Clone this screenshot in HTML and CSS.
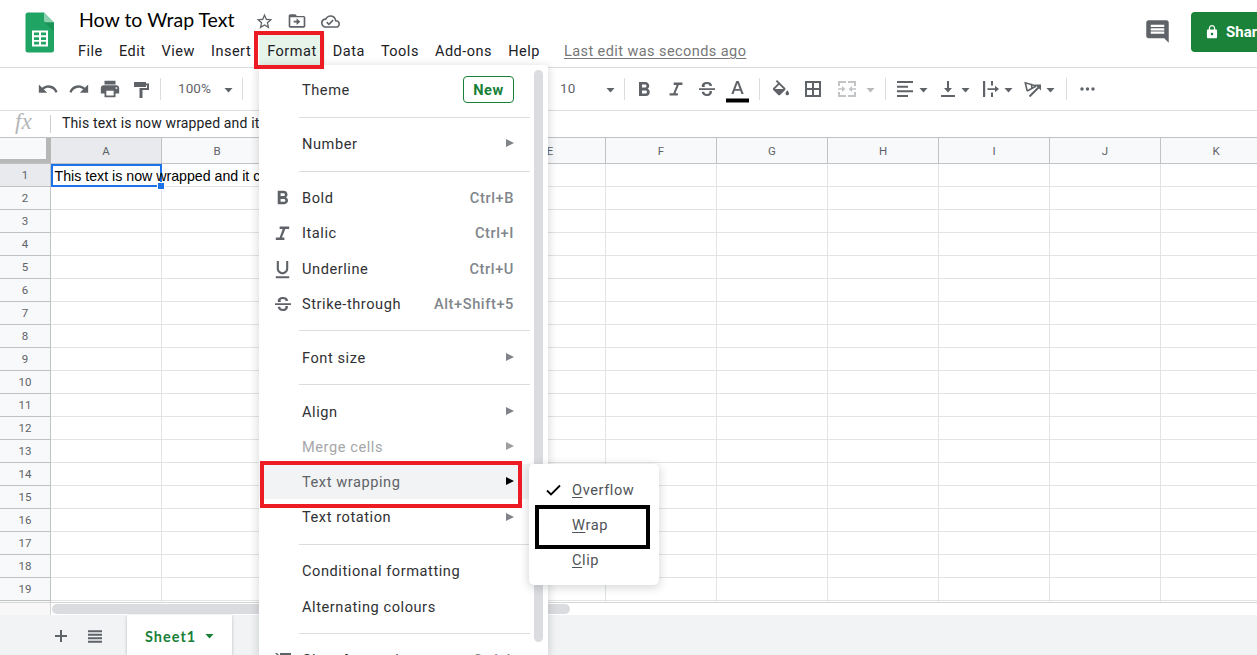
FILE: index.html
```html
<!DOCTYPE html>
<html lang="en-GB">
<head>
<meta charset="utf-8">
<title>How to Wrap Text</title>
<link rel="stylesheet" href="styles.css">
</head>
<body>
<div class="app">
  <header class="header">
    <svg class="logo" width="30" height="41" viewBox="0 0 30 41"><path d="M3 .5h16l10 10V38a2.500 2.500 0 0 1-2.500 2.500H3A2.500 2.500 0 0 1 .5 38V3A2.500 2.500 0 0 1 3 .5z" fill="#1fa463"/><path d="M19 .5l10 10H21.500A2.500 2.500 0 0 1 19 8z" fill="#8ed1b1"/><path d="M19.500 10.500H29v9z" fill="#189255"/><path fill="#fff" fill-rule="evenodd" d="M7 18.500h16v16H7zM9 20.500v2.700h5v-2.700zM16 20.500v2.700h5v-2.700zM9 25.200v2.700h5v-2.700zM16 25.200v2.700h5v-2.700zM9 29.800v2.700h5v-2.700zM16 29.800v2.700h5v-2.700z"/></svg>
    <div class="heading">
      <div class="title-row">
        <span class="title">How to Wrap Text</span>
        <svg class="ic star" width="19" height="19" viewBox="0 0 24 24"><path d="M22 9.240l-7.190-.62L12 2 9.190 8.630 2 9.240l5.460 4.730L5.820 21 12 17.270 18.180 21l-1.630-7.030L22 9.240zM12 15.400l-3.760 2.270 1-4.280-3.320-2.880 4.380-.38L12 6.100l1.710 4.040 4.380.38-3.320 2.880 1 4.280L12 15.400z"/></svg>
        <svg class="ic move" width="20" height="20" viewBox="0 0 24 24"><path d="M20 6h-8l-2-2H4c-1.100 0-2 .9-2 2v12c0 1.100.9 2 2 2h16c1.100 0 2-.9 2-2V8c0-1.100-.9-2-2-2zm0 12H4V7.500h16V18zM11.500 16.800l4.500-4-4.500-4v3H8v2h3.500z"/></svg>
        <svg class="ic cloud" width="19" height="19" viewBox="0 0 24 24"><path d="M19.350 10.040A7.490 7.490 0 0 0 12 4C9.110 4 6.600 5.640 5.350 8.040A5.994 5.994 0 0 0 0 14c0 3.310 2.690 6 6 6h13c2.760 0 5-2.240 5-5 0-2.640-2.050-4.780-4.650-4.960zM19 18H6c-2.210 0-4-1.790-4-4 0-2.050 1.530-3.760 3.560-3.970l1.070-.11.5-.95A5.469 5.469 0 0 1 12 6c2.620 0 4.880 1.860 5.390 4.430l.3 1.500 1.530.11A2.980 2.980 0 0 1 22 15c0 1.650-1.350 3-3 3zm-9-3.820l-2.090-2.090L6.500 13.500 10 17l6.010-6.010-1.410-1.410z"/></svg>
      </div>
      <nav class="menubar">
        <span class="m">File</span><span class="m">Edit</span><span class="m">View</span><span class="m">Insert</span><span class="m">Format</span><span class="m">Data</span><span class="m">Tools</span><span class="m">Add-ons</span><span class="m">Help</span><span class="last-edit">Last edit was seconds ago</span>
      </nav>
    </div>
    <svg class="ic comment" width="27" height="27" viewBox="0 0 24 24"><path d="M21.990 4c0-1.100-.89-2-1.990-2H4c-1.100 0-2 .9-2 2v12c0 1.100.9 2 2 2h14l4 4-.01-18zM18 14H6v-2h12v2zm0-3H6V9h12v2zm0-3H6V6h12v2z"/></svg>
    <div class="share"><svg width="12" height="14" viewBox="4 1 16 22"><path fill="#fff" fill-rule="evenodd" d="M18 8h-1V6c0-2.760-2.240-5-5-5S7 3.240 7 6v2H6c-1.100 0-2 .9-2 2v10c0 1.100.9 2 2 2h12c1.100 0 2-.9 2-2V10c0-1.100-.9-2-2-2zm-6 9c-1.100 0-2-.9-2-2s.9-2 2-2 2 .9 2 2-.9 2-2 2zm3.100-9H8.900V6a3.100 3.100 0 0 1 6.200 0v2z"/></svg><span>Share</span></div>
  </header>

  <div class="toolbar">
    <span class="tool"><svg class="ic" width="22" height="22" viewBox="0 0 24 24"><path d="M12.500 8c-2.650 0-5.050.99-6.900 2.600L2 7v9h9l-3.620-3.620c1.390-1.160 3.160-1.880 5.120-1.880 3.540 0 6.550 2.310 7.600 5.500l2.370-.78C21.080 11.030 17.150 8 12.500 8z"/></svg></span>
    <span class="tool"><svg class="ic" width="22" height="22" viewBox="0 0 24 24"><path d="M18.400 10.600C16.550 8.990 14.150 8 11.500 8c-4.650 0-8.580 3.030-9.960 7.220L3.900 16c1.050-3.190 4.050-5.500 7.600-5.500 1.950 0 3.730.72 5.120 1.880L13 16h9V7l-3.600 3.600z"/></svg></span>
    <span class="tool"><svg class="ic" width="22" height="22" viewBox="0 0 24 24"><path d="M19 8H5c-1.660 0-3 1.340-3 3v6h4v4h12v-4h4v-6c0-1.660-1.340-3-3-3zm-3 11H8v-5h8v5zm3-7c-.55 0-1-.45-1-1s.45-1 1-1 1 .45 1 1-.45 1-1 1zm-1-9H6v4h12V3z"/></svg></span>
    <span class="tool paint"><svg class="ic" width="15" height="17" viewBox="0 0 15 17"><path d="M0 1h12v1.500h3V9H8.500v8H5.500V7H13V4.300h-1V6H0z"/></svg></span>
    <i class="bar"></i>
    <span class="val zoom">100%</span><i class="caret"></i><i class="bar bar-zoom"></i>
    <span class="val size">10</span><i class="caret"></i><i class="bar bar-size"></i>
    <span class="tool bold"><svg class="ic" width="24" height="24" viewBox="0 0 24 24"><path d="M15.600 10.790c.97-.67 1.650-1.770 1.650-2.790 0-2.260-1.750-4-4-4H7v14h7.040c2.090 0 3.710-1.700 3.710-3.790 0-1.520-.86-2.820-2.150-3.420zM10 6.500h3c.83 0 1.500.67 1.500 1.500s-.67 1.500-1.500 1.500h-3v-3zm3.500 9H10v-3h3.500c.83 0 1.500.67 1.500 1.500s-.67 1.500-1.500 1.500z"/></svg></span>
    <span class="tool"><svg class="ic" width="22" height="22" viewBox="0 0 24 24"><path d="M9.500 5v2.500h3.200L9 16.500H5V19h9v-2.500h-2.600l3.700-9H19V5z"/></svg></span>
    <span class="tool"><svg class="ic" width="16" height="16" viewBox="0 0 16 16"><path d="M0 7.200h16V9H0zM3 5.900C2 2.800 4.800 1 8 1c3.200 0 5 1.600 5 4h-2.500c0-1.200-.9-2-2.500-2-2.200 0-3.100 1.300-2 2.900zM10.200 10h2.600c.8 2.900-1.600 5-4.800 5-3.200 0-5.200-1.700-5.200-4.200h2.500c.1 1.400 1 2.200 2.700 2.200 2 0 3-1.400 2.200-3z"/></svg></span>
    <span class="tool text-colour"><svg class="ic" width="23" height="22" viewBox="0 0 23 22"><path d="M10.300 0h2.400l5 13h-2.300l-1.100-3.200H8.700L7.600 13H5.300zM9.400 7.900h4.200L11.500 2.200z"/><path d="M0 17.500h23v4H0z" fill="#000"/></svg></span>
    <i class="bar bar-colour"></i>
    <span class="tool fill"><svg class="ic" width="18" height="18" viewBox="2 0 20 20"><path d="M16.560 8.940L7.620 0 6.210 1.410l2.380 2.380-5.150 5.150c-.59.59-.59 1.540 0 2.120l5.500 5.500c.29.29.68.44 1.060.44s.77-.15 1.060-.44l5.500-5.500c.59-.58.59-1.530 0-2.120zM5.210 10L10 5.210 14.790 10zM19 11.500s-2 2.170-2 3.500c0 1.100.9 2 2 2s2-.9 2-2c0-1.330-2-3.500-2-3.500z"/></svg></span>
    <span class="tool borders"><svg class="ic" width="16" height="16" viewBox="0 0 16 16"><path fill-rule="evenodd" d="M0 0h16v16H0zM2 2v5h5V2zM9 2v5h5V2zM2 9v5h5V9zM9 9v5h5V9z"/></svg></span>
    <span class="tool merge"><svg width="18" height="16" viewBox="0 0 18 16" fill="#c2c4c6"><path d="M0 0h8v2H2v3H0zM10 0h8v5h-2V2h-6zM0 11h2v3h6v2H0zM16 11h2v5h-8v-2h6zM0 7.200h4V5l3.500 3L4 11V8.800H0zM18 7.200h-4V5l-3.500 3 3.500 3V8.800h4z"/></svg></span><i class="caret faded"></i>
    <i class="bar bar-merge"></i>
    <span class="tool halign"><svg class="ic" width="16" height="16" viewBox="0 0 16 16"><path d="M0 0h16v2H0zM0 4.700h11v2H0zM0 9.300h16v2H0zM0 14h11v2H0z"/></svg></span><i class="caret c1"></i>
    <span class="tool valign"><svg class="ic" width="14" height="16" viewBox="0 0 14 16"><path d="M6 0h2v7h3l-4 4.500L3 7h3zM0 14h14v2H0z"/></svg></span><i class="caret c2"></i>
    <span class="tool wrapping"><svg class="ic" width="16" height="16" viewBox="0 0 16 16"><path d="M0 0h2.200v16H0zM8 0h2v4.500H8zM8 11.500h2V16H8zM4.500 7.200H12V4.800L16 8l-4 3.200V8.900H4.500z"/></svg></span><i class="caret c3"></i>
    <span class="tool rotation"><svg width="18" height="17" viewBox="0 0 18 17" fill="none" stroke="#5f6368" stroke-width="2"><path d="M3.200 10L1.300 1.800l11 3.200M3.200 10l9.100-5M7.500 2.800l.5 5" stroke-width="1.600"/><path d="M5.500 15.500L15 6"/><path d="M17 3.500v6l-6-6z" fill="#5f6368" stroke="none"/></svg></span><i class="caret c4"></i>
    <i class="bar bar-rotate"></i>
    <svg class="ic more" width="15" height="4" viewBox="0 0 15 4"><circle cx="2" cy="2" r="1.700"/><circle cx="7.500" cy="2" r="1.700"/><circle cx="13" cy="2" r="1.700"/></svg>
  </div>

  <div class="formula">
    <span class="fx">fx</span><i class="fx-bar"></i><span class="fx-text">This text is now wrapped and it can be seen</span>
  </div>

  <div class="columns">
    <div class="corner"></div>
    <div class="col active">A</div><div class="col">B</div><div class="col">C</div><div class="col">D</div><div class="col">E</div><div class="col">F</div><div class="col">G</div><div class="col">H</div><div class="col">I</div><div class="col">J</div><div class="col">K</div>
  </div>
  <div class="sheet">
    <div class="rows">
      <div class="row active">1</div><div class="row">2</div><div class="row">3</div><div class="row">4</div><div class="row">5</div><div class="row">6</div><div class="row">7</div><div class="row">8</div><div class="row">9</div><div class="row">10</div><div class="row">11</div><div class="row">12</div><div class="row">13</div><div class="row">14</div><div class="row">15</div><div class="row">16</div><div class="row">17</div><div class="row">18</div><div class="row">19</div>
    </div>
    <div class="cells">
      <div class="selected"><span class="cell-text">This text is now wrapped and it can be</span><i class="handle"></i></div>
    </div>
  </div>
  <div class="hscroll"><div class="hscroll-head"></div><div class="hthumb"></div></div>
  <footer class="footer">
    <svg class="plus" width="12" height="12" viewBox="0 0 12 12"><path d="M5 0h2v5h5v2H7v5H5V7H0V5h5z" fill="#5f6368"/></svg>
    <svg class="all" width="14" height="13" viewBox="0 0 14 13"><path d="M0 .3h14v2H0zM0 3.800h14v2H0zM0 7.300h14v2H0zM0 10.800h14v2H0z" fill="#5f6368"/></svg>
    <div class="tab"><span>Sheet1</span><i class="caret green"></i></div>
  </footer>
</div>

<div class="menu">
  <div class="item"><span class="label">Theme</span><span class="new">New</span></div>
  <hr>
  <div class="item"><span class="label">Number</span><i class="arrow"></i></div>
  <hr>
  <div class="item"><svg class="ic b" width="23" height="23" viewBox="0 0 24 24"><path d="M15.600 10.790c.97-.67 1.650-1.770 1.650-2.790 0-2.260-1.750-4-4-4H7v14h7.040c2.090 0 3.710-1.700 3.710-3.790 0-1.520-.86-2.820-2.150-3.420zM10 6.500h3c.83 0 1.500.67 1.500 1.500s-.67 1.500-1.500 1.500h-3v-3zm3.500 9H10v-3h3.500c.83 0 1.500.67 1.500 1.500s-.67 1.500-1.500 1.500z"/></svg><span class="label">Bold</span><span class="key">Ctrl+B</span></div>
  <div class="item"><svg class="ic" width="23" height="23" viewBox="0 0 24 24"><path d="M9 4.800v2.400h3.200L9 16.300H5v2.400h9v-2.400h-2.600l3.500-9.100H19V4.800z"/></svg><span class="label">Italic</span><span class="key">Ctrl+I</span></div>
  <div class="item"><svg class="ic b" width="23" height="23" viewBox="0 0 24 24"><path d="M12 17c3.310 0 6-2.690 6-6V3h-2.200v8c0 2.100-1.700 3.800-3.800 3.800S8.200 13.100 8.200 11V3H6v8c0 3.310 2.690 6 6 6zm-7 2v2h14v-2H5z"/></svg><span class="label">Underline</span><span class="key">Ctrl+U</span></div>
  <div class="item"><svg class="ic" width="16" height="16" viewBox="0 0 16 16"><path d="M0 7.200h16V9H0zM3 5.900C2 2.800 4.800 1 8 1c3.200 0 5 1.600 5 4h-2.500c0-1.200-.9-2-2.500-2-2.200 0-3.100 1.300-2 2.900zM10.200 10h2.600c.8 2.900-1.600 5-4.800 5-3.200 0-5.200-1.700-5.200-4.200h2.500c.1 1.400 1 2.200 2.700 2.200 2 0 3-1.400 2.200-3z"/></svg><span class="label">Strike-through</span><span class="key">Alt+Shift+5</span></div>
  <hr>
  <div class="item"><span class="label">Font size</span><i class="arrow"></i></div>
  <hr>
  <div class="item"><span class="label">Align</span><i class="arrow"></i></div>
  <div class="item disabled"><span class="label">Merge cells</span><i class="arrow"></i></div>
  <div class="item hover"><span class="label">Text wrapping</span><i class="arrow"></i></div>
  <div class="item"><span class="label">Text rotation</span><i class="arrow"></i></div>
  <hr>
  <div class="item"><span class="label">Conditional formatting</span></div>
  <div class="item"><span class="label">Alternating colours</span></div>
  <hr>
  <div class="item clear"><svg class="ic" width="16" height="14" viewBox="0 0 16 14"><path d="M5 0h11v2h-4l-4 12H6l3.500-12H5zM0 0l1-1 14 14-1 1z"/></svg><span class="label">Clear formatting</span><span class="key">Ctrl+\</span></div>
  <div class="menu-scroll"></div>
</div>

<div class="submenu">
  <div class="sub"><svg width="15" height="12" viewBox="0 0 15 12"><path d="M1 6.500l4 4L14 1.500" fill="none" stroke="#000" stroke-width="1.800"/></svg><span><u>O</u>verflow</span></div>
  <div class="sub"><span><u>W</u>rap</span></div>
  <div class="sub"><span><u>C</u>lip</span></div>
</div>

<div class="mark mark-format"></div>
<div class="mark mark-wrapping"></div>
<div class="mark mark-wrap"></div>
</body>
</html>
```

FILE: styles.css
```css
* { box-sizing: border-box; }
body { margin: 0; width: 1257px; height: 655px; overflow: hidden; position: relative; background: #fff; font-family: Roboto, "Liberation Sans", sans-serif; color: #202124; }
svg { display: block; flex: none; }
.ic { fill: #5f6368; }
.app { display: flex; flex-direction: column; width: 1257px; height: 655px; overflow: hidden; }

.header { height: 68px; flex: none; border-bottom: 1px solid #dadce0; display: flex; align-items: flex-start; overflow: hidden; }
.logo { margin: 12px 0 0 25px; }
.heading { margin-left: 15px; flex: none; width: 1071px; padding-top: 5px; }
.title-row { display: flex; align-items: center; height: 30px; padding-left: 9px; }
.title { font: 19.500px/30px Lato, sans-serif; color: #000; width: 176px; white-space: nowrap; }
.star { margin-top: 2px; }
.move { margin: 2px 0 0 13px; }
.cloud { margin: 2px 0 0 14px; }
.menubar { display: flex; height: 31px; font-size: 14.500px; letter-spacing: 0.5px; line-height: 33px; white-space: nowrap; }
.m { padding: 0 8.060px; }
.m:nth-child(5) { background: #e6f4ea; }
.last-edit { margin-left: 16px; color: #777; letter-spacing: 0.43px; text-decoration: underline; text-underline-offset: 2px; }
.comment { margin: 18px 0 0 3px; }
.share { margin: 12px 0 0 20px; width: 118px; height: 40px; border-radius: 4px; background: #1a8239; color: #fff; display: flex; align-items: center; gap: 8px; padding-left: 15px; font-weight: 700; font-size: 15px; flex: none; }

.toolbar { height: 43px; flex: none; border-bottom: 1px solid #dadce0; display: flex; align-items: center; padding-left: 32px; }
.tool { width: 31px; display: flex; justify-content: center; flex: none; }
.paint { padding-left: 2px; }
.bar { width: 1px; height: 22px; background: #dadce0; margin-left: 4px; flex: none; }
.val { font-size: 13.500px; color: #5f6368; letter-spacing: 0.1px; flex: none; line-height: 20px; padding-bottom: 2px; }
.zoom { width: 46px; margin-left: 17px; }
.caret { width: 9px; height: 5px; background: #5f6368; clip-path: polygon(0 0, 100% 0, 50% 100%); flex: none; margin-top: 2px; }
.bar-zoom { margin-left: 9px; }
.size { margin-left: 317px; width: 46px; }
.bar-size { margin-left: 9px; }
.bar-size + .tool { margin-left: 4px; }
.bold { padding: 2px 1px 0 0; }
.text-colour { padding-top: 5px; }
.bar-colour { margin-left: 6px; }
.fill { margin-left: 5px; }
.borders { width: 34px; }
.merge { width: 34px; margin: 0 2px 0 0; }
.faded { background: #b8babc; }
.bar-merge { margin-left: 10px; }
.halign { width: 16px; margin-left: 11px; }
.c1 { margin-left: 6px; }
.valign { width: 14px; margin-left: 13px; }
.c2 { margin-left: 6px; }
.wrapping { width: 16px; margin-left: 13px; }
.c3 { margin-left: 5px; }
.rotation { width: 18px; margin-left: 11px; }
.c4 { margin-left: 4px; }
.bar-rotate { margin-left: 11px; }
.more { margin-left: 13px; }

.formula { height: 26px; flex: none; display: flex; align-items: center; white-space: nowrap; overflow: hidden; }
.fx { width: 50px; padding: 0 0 4px 15px; font: italic 23px/20px "Liberation Serif", serif; color: #b4b6b8; flex: none; }
.fx-bar { width: 1px; height: 18px; background: #ccc; }
.fx-text { margin-left: 11px; font-size: 14px; letter-spacing: 0.15px; padding-bottom: 2px; }

.columns { display: flex; flex: none; height: 27px; border-top: 1px solid #c0c3c4; border-bottom: 1px solid #c0c3c4; background: #f8f9fa; overflow: hidden; }
.corner { width: 51px; flex: none; border-right: 5px solid #b7b7b7; border-bottom: 4px solid #b7b7b7; }
.col { width: 111px; flex: none; border-right: 1px solid #c0c3c4; text-align: center; font-size: 11.500px; line-height: 26px; color: #5f6368; }
.sheet { display: flex; flex: none; height: 439px; border-bottom: 1px solid #d5d5d5; }
.rows { width: 51px; border-right: 1px solid #c0c3c4; background: #f8f9fa; }
.row { height: 23px; border-bottom: 1px solid #c0c3c4; text-align: center; font-size: 11.500px; line-height: 23px; color: #5f6368; }
.row.active, .col.active { background: #e8eaed; }
.cells { flex: 1; background-image: repeating-linear-gradient(90deg, transparent 0 110px, #e2e3e3 110px 111px), repeating-linear-gradient(180deg, transparent 0 22px, #e2e3e3 22px 23px); }
.selected { position: relative; width: 111px; height: 23px; border: 2px solid #1a73e8; white-space: nowrap; font: 14.200px/21px "Liberation Sans", sans-serif; color: #000; padding-left: 1.500px; }
.handle { position: absolute; right: -4px; bottom: -4px; width: 6px; height: 6px; background: #1a73e8; box-shadow: 0 0 0 1px #fff; }
.hscroll { display: flex; height: 12px; flex: none; align-items: center; }
.hscroll-head { width: 51px; height: 12px; background: #f8f8f8; border-right: 1px solid #d5d5d5; }
.hthumb { width: 518px; height: 10px; margin-left: 1px; border-radius: 5px; background: #dadce0; }
.footer { flex: 1; display: flex; align-items: center; background: #f1f3f4; padding-left: 55px; }
.plus { margin-top: 2px; }
.all { margin: 2px 0 0 21px; }
.tab { margin-left: 25px; width: 105px; height: 40px; background: #fff; display: flex; align-items: center; padding-left: 18px; color: #188038; font: 700 14.500px/40px Lato, sans-serif; letter-spacing: 1px; box-shadow: 0 1px 3px rgba(60,64,67,.3); }
.tab span { width: 60px; padding-top: 3px; }
.green { background: #188038; }

.menu { position: absolute; left: 259px; top: 65px; width: 289px; height: 590px; overflow: hidden; background: #fff; border-radius: 4px 4px 0 0; padding: 7.400px 18px 0 0; }
.menu, .submenu { box-shadow: 0 2px 8px 1px rgba(60,64,67,.2); }
.item { height: 35.200px; display: flex; align-items: center; padding-right: 16px; font-size: 14.600px; letter-spacing: 0.56px; color: #303134; white-space: nowrap; }
.item .label { margin-left: 43px; flex: 1; }
.item .label, .key { padding-top: 0.600px; }
.item svg { margin-left: 12px; }
.item svg.b { margin-top: 1.500px; }
.item svg[width="16"] { margin-left: 16px; }
.item svg + .label { margin-left: 8px; }
.item svg[width="16"] + .label { margin-left: 11px; }
.item.clear { padding-top: 0; height: 34.400px; }
.key { color: #80868b; font-weight: 500; letter-spacing: 0.6px; }
.menu hr { margin: 9px 0 8.800px 40px; height: 1px; border: 0; background: #dadce0; }
.new { border: 1px solid #188038; border-radius: 4px; color: #188038; font-weight: 700; width: 51px; height: 27px; line-height: 27px; text-align: center; }
.arrow { border: 4px solid transparent; border-left: 8px solid #808387; border-right: 0; margin: 0 0 1px 0; }
.disabled { color: #a5a7a9; }
.disabled .arrow { border-left-color: #9c9ea0; }
.hover { background: #f1f3f4; color: #5f6368; }
.hover .arrow { border-left-color: #000; }
.menu-scroll { position: absolute; right: 5px; top: 5px; width: 9px; height: 572px; border-radius: 5px; background: #dadce0; }
.submenu { position: absolute; left: 529px; top: 464px; width: 130px; height: 121px; background: #fff; border-radius: 5px; padding-top: 8px; }
.sub { height: 35.200px; display: flex; align-items: center; font-size: 14.600px; letter-spacing: 0.58px; color: #505357; }
.sub span { padding-top: 0.900px; }
.sub svg { margin: 0 11px 0 17px; }
.sub span:first-child { margin-left: 43px; }
.sub u { text-underline-offset: 2px; }
.mark { position: absolute; border: 4px solid #ed1c24; }
.mark-format { left: 254px; top: 31px; width: 70px; height: 38px; }
.mark-wrapping { left: 260px; top: 461px; width: 262px; height: 47px; }
.mark-wrap { left: 535px; top: 505px; width: 115px; height: 44px; border-color: #000; }
```
